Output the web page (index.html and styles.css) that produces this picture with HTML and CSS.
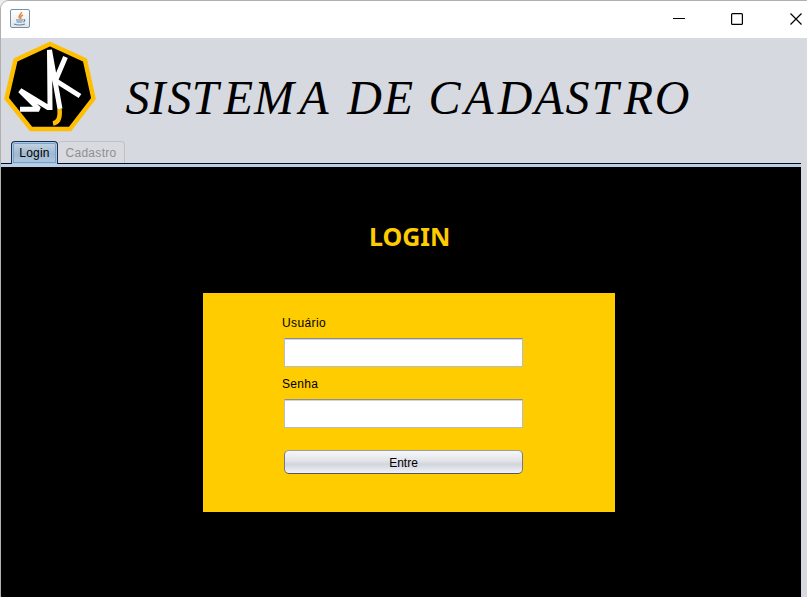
FILE: index.html
```
<!DOCTYPE html>
<html lang="pt-BR">
<head>
<meta charset="utf-8">
<title>Sistema de Cadastro</title>
<link rel="stylesheet" href="styles.css">
</head>
<body>
<div class="window">
  <header class="titlebar">
    <span class="app-icon">
      <svg width="16" height="16" viewBox="0 0 16 16" fill="none">
        <path d="M9.500 1C10 3 5.500 4 7.500 7.500M11 4C8 5.500 8.500 6 9 8" stroke="#e8893f" stroke-width="1.500"/>
        <path d="M4 9h7M4.500 11h6M11.500 8.500q2.500 0 0 2.500M2 13q5 2 11 0" stroke="#5d83a3" stroke-width="1.200"/>
      </svg>
    </span>
    <svg class="controls" width="136" height="18" viewBox="671 10 136 18" fill="none" stroke="#000">
      <path d="M673 18.500h12" />
      <rect x="731.600" y="13.600" width="10.800" height="10.800" rx="1" stroke-width="1.200"/>
      <path d="M790.500 13.500l11 11M801.500 13.500l-11 11" stroke-width="1.200"/>
    </svg>
  </header>
  <div class="banner">
    <svg width="806" height="103" viewBox="1 38 806 103">
      <path d="M50 44L85 60L93.500 98.500L70 129H31L6.500 98.500L15.500 60Z" fill="#000" stroke="#ffbf00" stroke-width="4.500"/>
      <g fill="none" stroke="#fff" stroke-width="5">
        <path d="M20 109.200H39L20 90.500L48 107.500H50L49.500 50L60 109" stroke-linejoin="miter" stroke-miterlimit="2"/>
        <path d="M65.500 57L55.500 80.500L80 96"/>
      </g>
      <path d="M59.500 109Q61 122 53 123.500" fill="none" stroke="#ffbf00" stroke-width="4.500"/>
      <text class="heading" y="114" x="137.500 157.500 179.500 205 238.500 274 314 338 364.500 398.500 420 444.500 479 515 549 577.500 605 638.500 672">SISTEMA DE CADASTRO</text>
    </svg>
  </div>
  <nav class="tabs">
    <span class="tab active">Login</span>
    <span class="tab disabled">Cadastro</span>
  </nav>
  <div class="rule"></div>
  <main class="content">
    <h1>LOGIN</h1>
    <form class="panel">
      <label class="user-label" for="user">Usuário</label>
      <input id="user" type="text">
      <label for="pass">Senha</label>
      <input id="pass" type="password">
      <button type="button">Entre</button>
    </form>
  </main>
</div>
</body>
</html>
```
FILE: styles.css
```
* { box-sizing: border-box; }
body { margin: 0; background: #ececec; overflow: hidden; font: 12px/14px "Liberation Sans", Arial, sans-serif; }
.window {
  width: 815px;
  height: 605px;
  border: 1px solid #b0b0b0;
  border-radius: 9px;
  overflow: hidden;
  background: #d6d9df;
}
.titlebar {
  height: 37px;
  width: 806px;
  background: #fff;
  display: flex;
  justify-content: space-between;
  padding: 8px 0 0 9px;
}
.app-icon {
  width: 20px;
  height: 19px;
  border: 1px solid #7890a5;
  border-radius: 2px;
  background: linear-gradient(#fff, #e2e6eb);
  padding: 1px;
}
.app-icon svg { display: block; }
.controls { margin-top: 1px; }
.banner { height: 103px; }
.banner svg { display: block; }
.heading { font: italic 48px "Liberation Serif", serif; fill: #000; text-anchor: middle; }
.tabs {
  display: flex;
  height: 23px;
  width: 800px;
  padding-left: 10px;
  background: linear-gradient(#0a0a23, #0a0a23) bottom / 100% 1px no-repeat;
}
.tab { height: 23px; padding-top: 5px; text-align: center; border-radius: 4px 4px 0 0; }
.active {
  width: 47px;
  border: 1px solid #1d2c45;
  border-bottom: 0;
  padding: 4px 0 0;
  letter-spacing: .2px;
  background: linear-gradient(#c8d5e3, #9fb8d1 55%, #b1c9df);
  box-shadow: inset 0 0 0 1px #a9c8e6, inset 0 0 0 2px #73a4d1;
}
.disabled {
  width: 67px;
  height: 22px;
  border: 1px solid #bec1c7;
  border-left: 0;
  border-bottom: 0;
  padding-top: 4px;
  letter-spacing: .3px;
  color: #8e8f91;
  background: #d9dae0;
}
.rule { width: 800px; height: 3px; background: #b8cfe5; }
.content { width: 800px; height: 438px; background: #000; padding-top: 52px; }
h1 {
  margin: 0 0 40px 368px;
  font: bold 25px/34px "Noto Sans", sans-serif;
  color: #fc0;
}
.panel {
  width: 412px;
  height: 219px;
  margin-left: 202px;
  padding: 23px 0 0 79px;
  background: #fc0;
  display: flex;
  flex-direction: column;
}
label { height: 14px; letter-spacing: .3px; }
.user-label { letter-spacing: .4px; }
input {
  width: 239px;
  height: 29px;
  margin: 8px 0 10px 2px;
  border: 1px solid #b9bcc5;
  border-top: 1px solid #8b8e97;
  box-shadow: inset 0 1px #d1d3d9;
  background: #fff;
  outline: 0;
}
button {
  width: 239px;
  height: 24px;
  margin: 12px 0 0 2px;
  padding: 1px 0 0;
  border: 1px solid #777a85;
  border-top-color: #9a9ca4;
  border-bottom-color: #535763;
  border-radius: 5px;
  background: linear-gradient(#f6f7f9, #e2e4e9 45%, #d2d5dc 60%, #f0f2f7);
  font: inherit;
  color: #000;
}
```
